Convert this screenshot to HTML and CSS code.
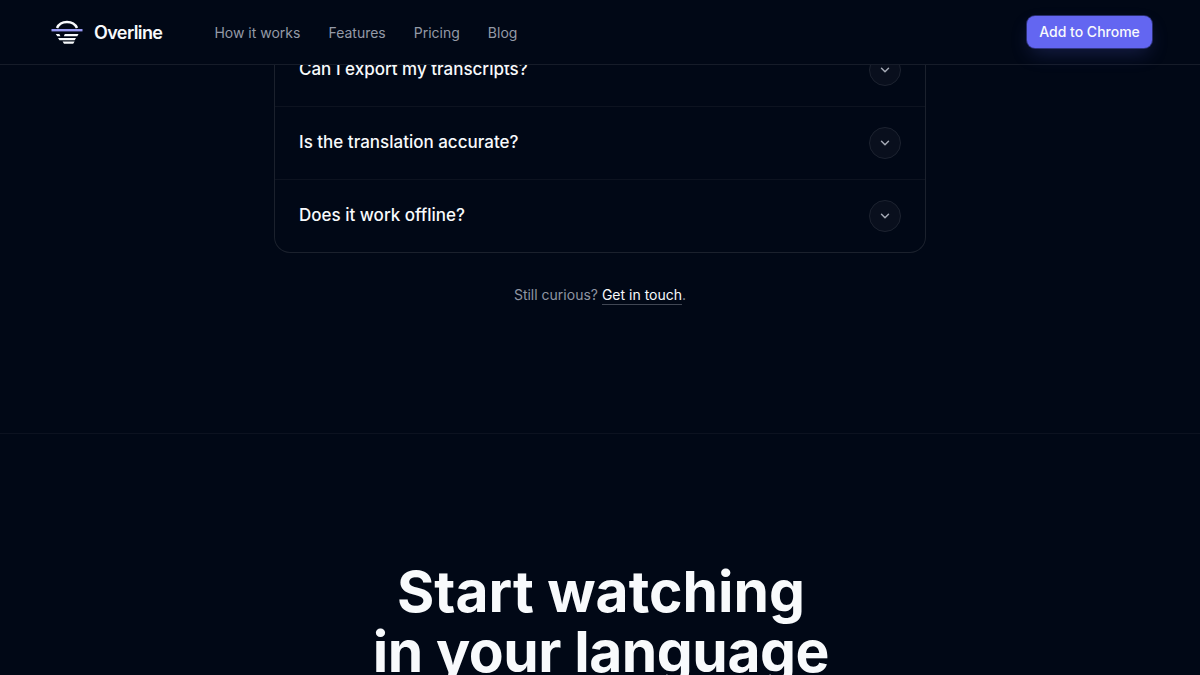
FILE: index.html
```html
<!DOCTYPE html>
<html lang="en">
<head>
    <meta charset="UTF-8">
    <meta name="viewport" content="width=device-width, initial-scale=1.0">
    <title>Overline</title>
    <link rel="stylesheet" href="styles.css">
</head>

<body>
<header class="site-header">
    <a class="brand" href="#">
        <svg class="logo" width="32" height="32" viewBox="0 0 32 32" fill="none">
            <path d="M6 12C7.8 8 11.400 6 16 6s8.200 2 10 6" stroke="#f8fafc" stroke-width="2.500"/>
            <path d="M.5 14.200h31" stroke="#9799f3" stroke-width="2.400"/>
            <path d="M4.800 18h3.500l1.200 2.300H6.300zM13.800 18H27.500l-1.200 2.300H12.800zM7 22h18l-1.300 2.200H8.500zM11.600 25.500h12l-1.400 2.300h-9.200z" fill="#f8fafc"/>
        </svg>
        <span class="brand-name">Overline</span>
    </a>
    <nav class="nav">
        <a href="#">How it works</a>
        <a href="#">Features</a>
        <a href="#">Pricing</a>
        <a href="#">Blog</a>
    </nav>
    <a class="btn" href="#">Add to Chrome</a>
</header>

<main>
    <section class="faq">
        <div class="faq-list">
            <div class="faq-item">
                <span>Can I export my transcripts?</span>
                <button class="toggle" aria-label="Expand"><svg width="14" height="14" viewBox="0 0 24 24"><path d="m6 9 6 6 6-6"/></svg></button>
            </div>
            <div class="faq-item">
                <span>Is the translation accurate?</span>
                <button class="toggle" aria-label="Expand"><svg width="14" height="14" viewBox="0 0 24 24"><path d="m6 9 6 6 6-6"/></svg></button>
            </div>
            <div class="faq-item">
                <span>Does it work offline?</span>
                <button class="toggle" aria-label="Expand"><svg width="14" height="14" viewBox="0 0 24 24"><path d="m6 9 6 6 6-6"/></svg></button>
            </div>
        </div>
        <p class="faq-note">Still curious? <a href="#">Get in touch</a>.</p>
    </section>

    <section class="cta">
        <h2><span class="line-one">Start watching</span><br><span class="line-two">in your language</span></h2>
    </section>
</main>
</body>
</html>
```

FILE: styles.css
```css
* {
    box-sizing: border-box;
}

body {
    margin: 0;
    height: 675px;
    overflow: hidden;
    background: #010816;
    color: #f8fafc;
    font-family: Inter, sans-serif;
}

a {
    color: inherit;
    text-decoration: none;
}

.site-header {
    position: relative;
    z-index: 10;
    display: flex;
    align-items: center;
    height: 65px;
    padding: 0 48px 0 51px;
    background: #010816;
    border-bottom: 1px solid #161c29;
}

.brand {
    display: flex;
    align-items: center;
    gap: 11px;
}

.brand-name {
    font-size: 18px;
    font-weight: 600;
    letter-spacing: -0.6px;
}

.nav {
    display: flex;
    gap: 28px;
    margin-left: 52px;
    padding-top: 1px;
    color: #949aa7;
    font-size: 14px;
}

.btn {
    display: flex;
    align-items: center;
    justify-content: center;
    width: 125px;
    height: 32px;
    margin-left: auto;
    padding-bottom: 1px;
    border-radius: 8px;
    background: #6366f1;
    font-size: 14px;
    font-weight: 500;
    box-shadow: 0 0 0 1px rgba(99, 102, 241, 0.4), 0 8px 20px -4px rgba(99, 102, 241, 0.25);
}

.faq {
    height: 400px;
    margin-top: -31px;
    border-bottom: 1px solid #0c1220;
}

/* the list runs on under the header */
.faq-list {
    width: 652px;
    margin: 0 auto;
    border: 1px solid #1b212d;
    border-top: 0;
    border-radius: 0 0 16px 16px;
}

.faq-item {
    display: flex;
    align-items: center;
    justify-content: space-between;
    height: 73px;
    padding: 0 24px;
    border-bottom: 1px solid #0d1320;
    font-size: 17px;
    font-weight: 500;
}

.faq-item:last-child {
    height: 72px;
    border-bottom: 0;
}

.faq-item span {
    padding-bottom: 2px;
}

.toggle {
    display: flex;
    align-items: center;
    justify-content: center;
    width: 32px;
    height: 32px;
    padding: 0;
    border: 1px solid #1d2330;
    border-radius: 50%;
    background: #090f1d;
}

.toggle path {
    fill: none;
    stroke: #a4a9b4;
    stroke-width: 2.5;
    stroke-linecap: round;
    stroke-linejoin: round;
}

.faq-note {
    margin: 31px 0 0;
    color: #8f95a2;
    font-size: 14px;
    line-height: 21px;
    text-align: center;
}

.faq-note a {
    padding-bottom: 1px;
    border-bottom: 1px solid #414754;
    color: #f8fafc;
}

.cta {
    padding: 128px 0 0 2px;
    text-align: center;
}

.cta h2 {
    margin: 0;
    font-size: 57px;
    font-weight: 700;
    line-height: 60px;
    white-space: nowrap;
}

.line-one {
    letter-spacing: 0;
}

.line-two {
    letter-spacing: -0.45px;
}
```
